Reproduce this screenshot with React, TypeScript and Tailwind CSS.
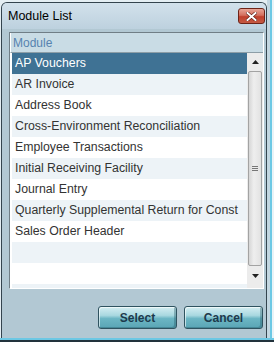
import React from "react";

const rows = [
  "AP Vouchers",
  "AR Invoice",
  "Address Book",
  "Cross-Environment Reconciliation",
  "Employee Transactions",
  "Initial Receiving Facility",
  "Journal Entry",
  "Quarterly Supplemental Return for Const",
  "Sales Order Header",
  "",
  "",
  "",
];

function Btn({ label }: { label: string }) {
  return (
    <div className="w-[79px] h-[23px] rounded-[3px] border border-[#2f5360] bg-[linear-gradient(to_bottom,#d4eef2_0%,#a9d8e0_40%,#6cb6c4_55%,#5aa5b5_100%)] shadow-[inset_1px_1px_0_rgba(255,255,255,0.6),inset_-2px_-1px_0_rgba(30,80,95,0.35)] flex items-center justify-center text-[12px] font-bold text-[#1d3a4c]">
      {label}
    </div>
  );
}

export default function App() {
  return (
    <div
      className="w-[274px] h-[342px] flex flex-col bg-[#e4eef3] overflow-hidden"
      style={{ fontFamily: '"Liberation Sans", Arial, sans-serif' }}
    >
      <div className="flex h-[338px]">
        <div className="w-[1px]" />
        <div className="mt-[2px] w-[266px] flex flex-col border-l border-t border-r border-[#34444e] rounded-t-[6px] bg-[#b2c8d3] overflow-hidden">
          {/* title bar */}
          <div className="h-[26px] flex items-center justify-between bg-[linear-gradient(to_bottom,#d2e1eb,#bdd1de)] pl-[6px] pr-[1px]">
            <span className="text-[12.5px] text-black leading-none">Module List</span>
            <div className="w-[27px] h-[16px] rounded-[3px] border border-[#6e2418] bg-[linear-gradient(to_bottom,#e8a597_0%,#d4705e_45%,#c0402c_55%,#c55a44_100%)] flex items-center justify-center">
              <svg width="11" height="9" viewBox="0 0 11 9">
                <path d="M1.5 1 L9.5 8 M9.5 1 L1.5 8" stroke="#5a1a12" strokeWidth="3.2" strokeLinecap="square" />
                <path d="M1.5 1 L9.5 8 M9.5 1 L1.5 8" stroke="#ffffff" strokeWidth="2" strokeLinecap="square" />
              </svg>
            </div>
          </div>
          {/* body */}
          <div className="flex-1 flex flex-col pl-[7px] pt-[3px]">
            <div className="w-[255px] h-[257px] border border-t-[#707e86] border-l-[#707e86] border-r-white border-b-white flex flex-col">
              <div className="h-[20px] flex items-center bg-[#c9dce5] border-b border-[#8d9ea7] border-l border-l-white pl-[2px] text-[12px] text-[#5683b0]">
                Module
              </div>
              <div className="flex h-[235px] overflow-hidden">
                <div className="w-[237px] flex flex-col bg-white pl-[2px]">
                  {rows.map((r, i) => (
                    <div
                      key={i}
                      className={
                        "h-[21px] shrink-0 flex items-center pl-[3px] text-[12.3px] whitespace-nowrap overflow-hidden " +
                        (i === 0
                          ? "bg-[#3f7294] text-white"
                          : i % 2 === 1
                          ? "bg-[#edf3f7] text-[#333333]"
                          : "bg-white text-[#333333]")
                      }
                    >
                      {r}
                    </div>
                  ))}
                </div>
                {/* scrollbar */}
                <div className="w-[16px] flex flex-col bg-[#ececec]">
                  <div className="h-[18px] flex items-center justify-center">
                    <svg width="7" height="4" viewBox="0 0 7 4">
                      <path d="M3.5 0 L7 4 L0 4 Z" fill="#222" />
                    </svg>
                  </div>
                  <div className="h-[195px] mx-[1px] rounded-[2px] border border-[#a3a3a3] bg-[linear-gradient(to_right,#d6d6d6,#eeeeee_40%,#e2e2e2)] flex items-center justify-center">
                    <div className="flex flex-col gap-[1px]">
                      <div className="w-[6px] h-px bg-[#777]" />
                      <div className="w-[6px] h-px bg-[#777]" />
                      <div className="w-[6px] h-px bg-[#777]" />
                    </div>
                  </div>
                  <div className="flex-1 flex items-start justify-center pt-[8px]">
                    <svg width="7" height="4" viewBox="0 0 7 4">
                      <path d="M0 0 L7 0 L3.5 4 Z" fill="#222" />
                    </svg>
                  </div>
                </div>
              </div>
            </div>
            <div className="mt-[17px] flex justify-end gap-[7px] pr-[3px]">
              <Btn label="Select" />
              <Btn label="Cancel" />
            </div>
          </div>
        </div>
        <div className="w-[3px] bg-[#c3d7e1]" />
        <div className="w-[2px] bg-[#6cc8e4]" />
        <div className="w-[2px] bg-[#e9f3f7]" />
      </div>
      <div className="h-[2px] bg-[#6cc8e4]" />
      <div className="h-[2px] bg-[#22323c]" />
    </div>
  );
}
